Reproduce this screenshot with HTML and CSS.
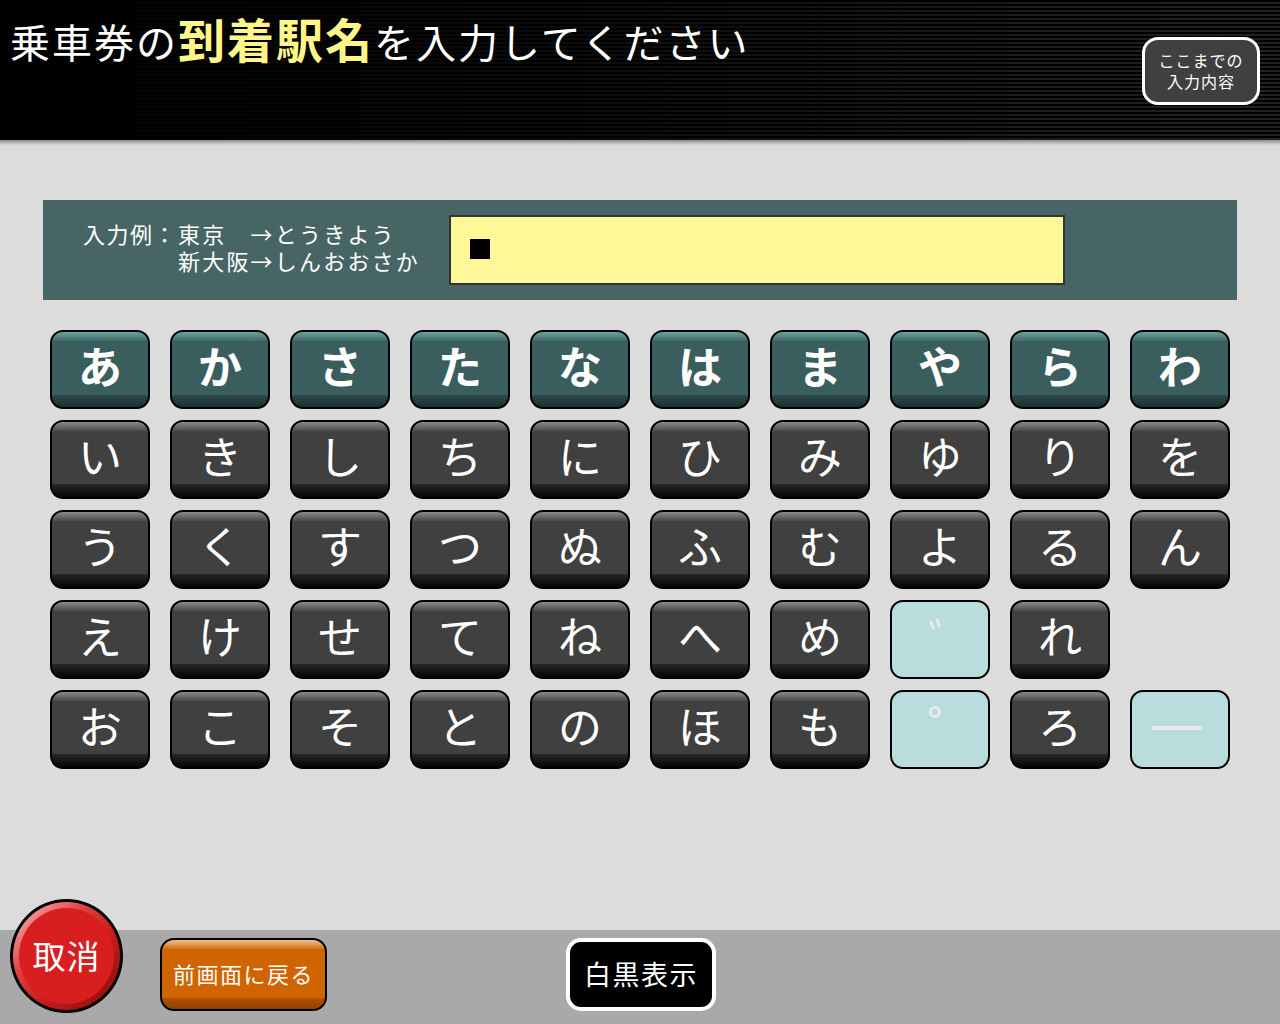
FILE: index.html
```html
<!DOCTYPE html>
<html lang="ja">
<head>
<meta charset="utf-8">
<title>到着駅名入力</title>
<link rel="stylesheet" href="styles.css">
</head>
<body>
<div class="screen">
  <header class="header">
    <h1 class="title">乗車券の<span class="title-em">到着駅名</span>を入力してください</h1>
    <button class="summary-btn"><span class="sb-line">ここまでの</span><span class="sb-line">入力内容</span></button>
  </header>
  <div class="header-shade"></div>
  <main class="main">
    <section class="input-panel">
      <div class="example">
        <div class="ex-label">入力例：</div>
        <div class="ex-lines">
          <div>東京　→とうきよう</div>
          <div>新大阪→しんおおさか</div>
        </div>
      </div>
      <div class="input-box"><span class="cursor"></span></div>
    </section>
    <section class="keyboard">
      <button class="key key-head">あ</button>
      <button class="key key-head">か</button>
      <button class="key key-head">さ</button>
      <button class="key key-head">た</button>
      <button class="key key-head">な</button>
      <button class="key key-head">は</button>
      <button class="key key-head">ま</button>
      <button class="key key-head">や</button>
      <button class="key key-head">ら</button>
      <button class="key key-head">わ</button>

      <button class="key">い</button>
      <button class="key">き</button>
      <button class="key">し</button>
      <button class="key">ち</button>
      <button class="key">に</button>
      <button class="key">ひ</button>
      <button class="key">み</button>
      <button class="key">ゆ</button>
      <button class="key">り</button>
      <button class="key">を</button>

      <button class="key">う</button>
      <button class="key">く</button>
      <button class="key">す</button>
      <button class="key">つ</button>
      <button class="key">ぬ</button>
      <button class="key">ふ</button>
      <button class="key">む</button>
      <button class="key">よ</button>
      <button class="key">る</button>
      <button class="key">ん</button>

      <button class="key">え</button>
      <button class="key">け</button>
      <button class="key">せ</button>
      <button class="key">て</button>
      <button class="key">ね</button>
      <button class="key">へ</button>
      <button class="key">め</button>
      <button class="key key-light" aria-label="゛">
        <svg class="mark mark-dakuten" width="14" height="14" viewBox="0 0 14 14">
          <line x1="1.5" y1="3" x2="5" y2="11" stroke="#eaeaea" stroke-width="2.6" stroke-linecap="butt"/>
          <line x1="7.5" y1="1" x2="11" y2="9" stroke="#eaeaea" stroke-width="2.6" stroke-linecap="butt"/>
        </svg>
      </button>
      <button class="key">れ</button>
      <span class="key-empty"></span>

      <button class="key">お</button>
      <button class="key">こ</button>
      <button class="key">そ</button>
      <button class="key">と</button>
      <button class="key">の</button>
      <button class="key">ほ</button>
      <button class="key">も</button>
      <button class="key key-light" aria-label="゜"><span class="mark mark-handaku"></span></button>
      <button class="key">ろ</button>
      <button class="key key-light" aria-label="ー"><span class="mark mark-long"></span></button>
    </section>
  </main>
  <footer class="footer">
    <button class="cancel-btn"><span class="cancel-inner">取消</span></button>
    <button class="back-btn">前画面に戻る</button>
    <button class="mono-btn">白黒表示</button>
  </footer>
</div>
</body>
</html>
```

FILE: styles.css
```css
* { box-sizing: border-box; }
html, body { margin: 0; padding: 0; }
body {
  width: 1280px;
  height: 1024px;
  overflow: hidden;
  background: #dcdcdc;
  font-family: "Noto Sans CJK JP", "Noto Sans", sans-serif;
}
button {
  font-family: inherit;
  padding: 0;
  cursor: pointer;
}
.screen {
  width: 1280px;
  height: 1024px;
  display: flex;
  flex-direction: column;
}

/* header */
.header {
  height: 140px;
  flex: none;
  display: flex;
  justify-content: space-between;
  align-items: flex-start;
  padding: 0 20px 0 10px;
  background:
    linear-gradient(to right, rgba(0,0,0,1) 0%, rgba(0,0,0,0.8) 40%, rgba(0,0,0,0.25) 100%),
    repeating-linear-gradient(to bottom, #000 0px, #000 2px, #2e2e2e 2px, #2e2e2e 4px);
}
.title {
  margin: 10px 0 0 0;
  font-size: 40px;
  font-weight: 400;
  letter-spacing: 2px;
  color: #fff;
  line-height: 56px;
  white-space: nowrap;
}
.title-em {
  font-size: 47px;
  font-weight: 700;
  letter-spacing: 2px;
  color: #fff68a;
}
.summary-btn {
  margin-top: 37px;
  width: 118px;
  height: 68px;
  border: 3px solid #fff;
  border-radius: 16px;
  background: #404040;
  color: #fff;
  font-size: 16px;
  line-height: 21px;
  letter-spacing: 1px;
  display: flex;
  flex-direction: column;
  align-items: center;
  justify-content: center;
}
.sb-line { display: block; white-space: nowrap; }
.header-shade {
  height: 5px;
  flex: none;
  background: linear-gradient(to bottom, #8a8a8a, #dcdcdc);
}

/* main */
.main {
  flex: 1;
  padding: 55px 43px 0 43px;
}
.input-panel {
  height: 100px;
  background: #476564;
  display: flex;
  align-items: center;
  padding: 0 0 0 40px;
}
.example {
  display: flex;
  color: #fff;
  font-size: 22px;
  line-height: 27px;
  letter-spacing: 2.2px;
  width: 366px;
  flex: none;
  margin-top: -7px;
  white-space: nowrap;
}
.ex-label { width: 95px; flex: none; letter-spacing: 1.5px; }
.input-box {
  width: 616px;
  height: 70px;
  background: #fff899;
  border: 2px solid #333;
  display: flex;
  align-items: center;
  padding-left: 19px;
}
.cursor {
  display: block;
  width: 20px;
  height: 20px;
  background: #000;
  margin-top: -3px;
}

/* keyboard */
.keyboard {
  margin: 30px 0 0 7px;
  display: grid;
  grid-template-columns: repeat(10, 100px);
  grid-auto-rows: 79px;
  column-gap: 20px;
  row-gap: 11px;
}
.key {
  border: 2px solid #000;
  border-radius: 13px;
  color: #fff;
  font-size: 44px;
  font-weight: 400;
  line-height: 1;
  padding-bottom: 10px;
  background: linear-gradient(to bottom,
    #8a8a8a 0px, #4a4a4a 9px, #404040 9px,
    #404040 calc(100% - 13px), #282828 calc(100% - 13px), #050505 100%);
}
.key-head {
  font-weight: 700;
  background: linear-gradient(to bottom,
    #6aa49f 0px, #3f6a68 9px, #395e5d 9px,
    #395e5d calc(100% - 12px), #2c4948 calc(100% - 12px), #1c3030 100%);
}
.key-light {
  background: #b9dddc;
  position: relative;
}
.mark {
  position: absolute;
  display: block;
}
.mark-dakuten {
  left: 37px;
  top: 16px;
}
.mark-handaku {
  left: 37px;
  top: 14px;
  width: 12px;
  height: 12px;
  border: 3px solid #eaeaea;
  border-radius: 50%;
}
.mark-long {
  left: 20px;
  top: 34px;
  width: 50px;
  height: 4px;
  background: #eaeaea;
}

/* footer */
.footer {
  height: 94px;
  flex: none;
  background: #a9a9a9;
  display: flex;
  align-items: flex-start;
  padding: 8px 0 0 10px;
}
.cancel-btn {
  margin-top: -39px;
  width: 113px;
  height: 114px;
  border: 3px solid #000;
  border-radius: 50%;
  background: linear-gradient(135deg, #ffc4c4 0%, #e04040 35%, #c81c1c 60%, #7e0c0c 100%);
  padding: 6px;
  display: flex;
}
.cancel-inner {
  flex: 1;
  border-radius: 50%;
  background: #d81e1e;
  color: #fff;
  font-size: 33px;
  font-weight: 400;
  letter-spacing: 1px;
  display: flex;
  align-items: center;
  justify-content: center;
  padding-bottom: 2px;
}
.back-btn {
  margin-left: 37px;
  width: 167px;
  height: 73px;
  border: 2px solid #000;
  border-radius: 14px;
  color: #fff;
  font-size: 22px;
  letter-spacing: 1.5px;
  padding-bottom: 4px;
  background: linear-gradient(to bottom,
    #f4be90 0px, #d66e14 9px, #d06400 9px,
    #d06400 calc(100% - 11px), #b05200 calc(100% - 11px), #8e4000 100%);
}
.mono-btn {
  margin-left: 239px;
  width: 150px;
  height: 73px;
  border: 4px solid #fff;
  border-radius: 15px;
  background: #000;
  color: #fff;
  font-size: 27px;
  letter-spacing: 1.5px;
  padding-bottom: 2px;
}
```
